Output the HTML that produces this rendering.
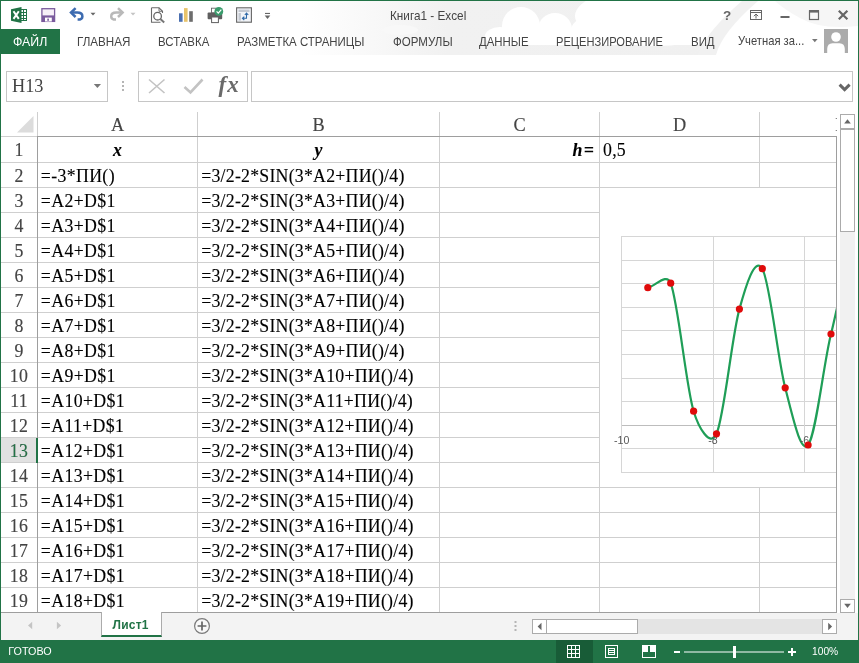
<!DOCTYPE html>
<html lang="ru"><head><meta charset="utf-8"><title>Книга1 - Excel</title>
<style>
html,body{margin:0;padding:0;background:#fff;}
body{width:859px;height:663px;overflow:hidden;position:relative;font-family:"Liberation Sans",sans-serif;color:#444;}
#w{position:absolute;left:0;top:0;width:859px;height:663px;overflow:hidden;background:#fff;will-change:transform;}
.a{position:absolute;white-space:nowrap;}
.tab{position:absolute;top:34px;height:16px;line-height:16px;font-size:12.6px;color:#444;white-space:nowrap;transform-origin:0 50%;}
.cell{position:absolute;height:25px;line-height:26px;font-family:"Liberation Serif",serif;font-size:17.8px;letter-spacing:0.24px;color:#000;white-space:nowrap;-webkit-text-stroke:0.12px #000;}
.rh{position:absolute;left:1px;width:36px;height:25px;line-height:26px;text-align:center;font-family:"Liberation Serif",serif;font-size:17.8px;letter-spacing:0.24px;color:#444;-webkit-text-stroke:0.15px #444;}
.ch{position:absolute;top:113px;height:23px;line-height:25px;text-align:center;font-family:"Liberation Serif",serif;font-size:18.3px;color:#444;-webkit-text-stroke:0.15px #444;}
.hl{position:absolute;height:1px;background:#cfcfcf;}
.vl{position:absolute;width:1px;background:#cfcfcf;}
svg{position:absolute;overflow:visible}
</style></head><body><div id="w">

<svg style="left:0;top:0" width="859" height="60" viewBox="0 0 859 60">
<defs><linearGradient id="cg" x1="0" x2="1" y1="0" y2="0"><stop offset="0" stop-color="#fff"/><stop offset="0.35" stop-color="#f1f1f1"/><stop offset="1" stop-color="#f0f0f0"/></linearGradient></defs>
<rect x="300" y="1" width="420" height="54" fill="url(#cg)"/>
<g fill="#fff">
<ellipse cx="521" cy="26" rx="19" ry="19"/><ellipse cx="500" cy="36" rx="15" ry="9"/><ellipse cx="555" cy="29" rx="17" ry="16"/><ellipse cx="586" cy="31" rx="15" ry="13"/>
<rect x="497" y="30" width="225" height="15"/>
<ellipse cx="655" cy="16" rx="80" ry="30"/><ellipse cx="400" cy="30" rx="18" ry="5" fill="#f8f8f8"/>
<path d="M700 55 Q712 30 745 1 L720 1 L720 55Z"/>
</g>
<path d="M697 55 Q708 30 742 1 L758 1 Q722 32 716 55Z" fill="#f1f1f1"/>
<path d="M775 1 H858 V26 Q820 30 800 18 Q785 10 775 1Z" fill="#f6f6f6"/>
</svg>
<div class="a" id="title" style="left:390px;top:8px;font-size:12.6px;line-height:16px;color:#444;transform-origin:0 50%;transform:scaleX(0.934)">Книга1 - Excel</div>
<svg style="left:0;top:0" width="300" height="30" viewBox="0 0 300 30">
<!-- excel logo -->
<rect x="20.5" y="9.5" width="6" height="11" fill="#fff" stroke="#217346" stroke-width="1"/>
<path d="M21 12.5H26M21 15.5H26M21 18.5H26M23.5 10V20" stroke="#217346" stroke-width="1" fill="none"/>
<path d="M11 9.3 L21.5 7 L21.5 23 L11 20.7Z" fill="#217346"/>
<path d="M13.5 11.3 L18.8 18.9 M18.8 11.3 L13.5 18.9" stroke="#fff" stroke-width="2" fill="none"/>
<!-- save -->
<rect x="41.9" y="8.7" width="12.7" height="12.7" fill="#f6f0f8" stroke="#7a5b9d" stroke-width="1.3"/>
<rect x="42" y="15.4" width="12.5" height="6" fill="#7a5b9d"/>
<rect x="45" y="17.6" width="6.8" height="3.9" fill="#fff"/>
<rect x="47.3" y="18.6" width="1.6" height="2.2" fill="#7a5b9d"/>
<!-- undo -->
<path d="M71 12.6 H77.3 Q82.4 12.6 82.4 16.4 Q82.4 19.6 77.6 19.6" fill="none" stroke="#3d6bb0" stroke-width="2.5"/>
<path d="M75.6 8.2 L71 12.6 L75.6 17" fill="none" stroke="#3d6bb0" stroke-width="2.5"/>
<path d="M90.5 12.8 H95.5 L93 15.6Z" fill="#666"/>
<!-- redo -->
<path d="M122.6 12.6 H116.3 Q111.2 12.6 111.2 16.4 Q111.2 19.6 116 19.6" fill="none" stroke="#b9b9b9" stroke-width="2.5"/>
<path d="M118 8.2 L122.6 12.6 L118 17" fill="none" stroke="#b9b9b9" stroke-width="2.5"/>
<path d="M130.5 12.8 H135.5 L133 15.6Z" fill="#c4c4c4"/>
<!-- print preview -->
<path d="M151.5 7.8 H159 L162.5 11.3 V13 M151.5 7.8 V22.2 H160.5" fill="none" stroke="#6a6a6a" stroke-width="1.1"/>
<path d="M159 7.8 V11.3 H162.5" fill="none" stroke="#6a6a6a" stroke-width="0.9"/>
<circle cx="157.6" cy="16.2" r="3.8" fill="#fff" stroke="#666" stroke-width="1.3"/>
<path d="M160.4 19 L164.2 22.4" stroke="#777" stroke-width="2"/>
<!-- chart -->
<rect x="179" y="13.3" width="3.6" height="8.5" fill="#4a6fb0"/>
<rect x="184" y="8.1" width="3.6" height="13.7" fill="#e8c36a"/>
<rect x="189.2" y="11.2" width="3.6" height="10.6" fill="#6d6d6d"/>
<!-- printer check -->
<rect x="207.6" y="12.5" width="14.6" height="6.7" rx="1" fill="#5f5f5f"/>
<rect x="211.5" y="8.2" width="5" height="4.5" fill="#fff" stroke="#666" stroke-width="0.9"/>
<rect x="211.6" y="17" width="6.8" height="5.6" fill="#fff" stroke="#5f5f5f" stroke-width="1"/>
<circle cx="218.8" cy="11.4" r="4.4" fill="#3a9c6c"/>
<path d="M216.6 11.4 L218.3 13.2 L221.3 9.6" fill="none" stroke="#fff" stroke-width="1.2"/>
<!-- table icon -->
<rect x="236.6" y="7.8" width="14.8" height="14.4" fill="#f2f4f8" stroke="#666" stroke-width="1.1"/>
<rect x="238.5" y="9.6" width="11" height="2.4" fill="#c4c9d2"/>
<rect x="238.5" y="13" width="2.4" height="7.6" fill="#c4c9d2"/>
<path d="M242.5 18.3 H246.5 V13.5 M244.3 16.6 L242.4 18.3 L244.3 20 M244.8 15 L246.5 13.1 L248.3 15" fill="none" stroke="#2f69a8" stroke-width="1.05"/>
<!-- customize -->
<rect x="265" y="12.9" width="5" height="1.1" fill="#666"/>
<path d="M264.7 15.6 H270.3 L267.5 19.1Z" fill="#666"/>
</svg>
<svg style="left:700px;top:0" width="159" height="60" viewBox="700 0 159 60">
<text x="723" y="19.6" font-family="'Liberation Sans',sans-serif" font-weight="bold" font-size="13.5" fill="#666">?</text>
<rect x="750.5" y="10.5" width="11" height="9" fill="none" stroke="#666" stroke-width="1"/>
<path d="M750.5 12.5H761.5" stroke="#666" stroke-width="1"/>
<path d="M756 14.3V18.5M753.8 16.2L756 14L758.2 16.2" stroke="#666" stroke-width="1" fill="none"/>
<rect x="780.5" y="16" width="9" height="2" fill="#666"/>
<rect x="809.5" y="11" width="9" height="8.5" fill="none" stroke="#666" stroke-width="1.2"/>
<rect x="809" y="10" width="10" height="2.6" fill="#666"/>
<path d="M838.8 10.7L847.4 19.3M847.4 10.7L838.8 19.3" stroke="#666" stroke-width="2.2"/>
<path d="M812 39.1H817.6L814.8 42.3Z" fill="#777"/>
<rect x="824" y="29" width="24" height="24" fill="#ababab"/>
<circle cx="836" cy="37" r="4.8" fill="#fff"/>
<path d="M827.2 53 V49 Q827.2 43.5 832.5 43.2 H839.5 Q844.8 43.5 844.8 49 V53Z" fill="#fff"/>
</svg>
<div class="a" style="left:0;top:29px;width:60px;height:25px;background:#217346"></div>
<div class="tab" id="t0" style="left:12.5px;transform:scaleX(0.9796);color:#fff;">ФАЙЛ</div>
<div class="tab" id="t1" style="left:76.5px;transform:scaleX(0.9224);">ГЛАВНАЯ</div>
<div class="tab" id="t2" style="left:157.5px;transform:scaleX(0.9085);">ВСТАВКА</div>
<div class="tab" id="t3" style="left:237.1px;transform:scaleX(0.9088);">РАЗМЕТКА СТРАНИЦЫ</div>
<div class="tab" id="t4" style="left:392.6px;transform:scaleX(0.9152);">ФОРМУЛЫ</div>
<div class="tab" id="t5" style="left:479.2px;transform:scaleX(0.9072);">ДАННЫЕ</div>
<div class="tab" id="t6" style="left:556.4px;transform:scaleX(0.8817);">РЕЦЕНЗИРОВАНИЕ</div>
<div class="tab" id="t7" style="left:691.0px;transform:scaleX(0.9082);">ВИД</div>
<div class="tab" id="t8" style="left:737.5px;transform:scaleX(0.8902);top:33px;">Учетная за...</div>
<div class="a" style="left:6px;top:71px;width:100px;height:29px;border:1px solid #c6c6c6"></div>
<div class="a" id="nb" style="left:12px;top:74px;font-family:'Liberation Serif',serif;font-size:18.3px;line-height:25px;color:#444">H13</div>
<div class="a" style="left:138px;top:71px;width:108px;height:29px;border:1px solid #c6c6c6"></div>
<div class="a" style="left:251px;top:71px;width:600px;height:29px;border:1px solid #c6c6c6"></div>
<svg style="left:0;top:60px" width="859" height="50" viewBox="0 60 859 50">
<path d="M93.8 84 H101 L97.4 88Z" fill="#777"/>
<g fill="#b5b5b5"><rect x="122" y="81" width="2" height="2"/><rect x="122" y="85" width="2" height="2"/><rect x="122" y="89" width="2" height="2"/></g>
<path d="M149 79.5 L164.5 93 M164.5 79.5 L149 93" stroke="#c3c3c3" stroke-width="1.6" fill="none"/>
<path d="M184.5 87 L190.5 92.5 L202.5 79.5" stroke="#c3c3c3" stroke-width="2.6" fill="none"/>
<text x="218.6" y="91.7" font-family="'Liberation Serif',serif" font-style="italic" font-weight="bold" font-size="23" letter-spacing="1" fill="#6a6a6a" id="fx">fx</text>
<path d="M839.6 84.6 L844.6 89.6 L849.6 84.6" stroke="#666" stroke-width="3" fill="none"/>
</svg>
<div class="hl" style="left:1px;top:136px;width:836px"></div>
<div class="hl" style="left:1px;top:162px;width:836px"></div>
<div class="hl" style="left:1px;top:187px;width:836px"></div>
<div class="hl" style="left:1px;top:212px;width:836px"></div>
<div class="hl" style="left:1px;top:237px;width:836px"></div>
<div class="hl" style="left:1px;top:262px;width:836px"></div>
<div class="hl" style="left:1px;top:287px;width:836px"></div>
<div class="hl" style="left:1px;top:312px;width:836px"></div>
<div class="hl" style="left:1px;top:337px;width:836px"></div>
<div class="hl" style="left:1px;top:362px;width:836px"></div>
<div class="hl" style="left:1px;top:387px;width:836px"></div>
<div class="hl" style="left:1px;top:412px;width:836px"></div>
<div class="hl" style="left:1px;top:437px;width:836px"></div>
<div class="hl" style="left:1px;top:462px;width:836px"></div>
<div class="hl" style="left:1px;top:487px;width:836px"></div>
<div class="hl" style="left:1px;top:512px;width:836px"></div>
<div class="hl" style="left:1px;top:537px;width:836px"></div>
<div class="hl" style="left:1px;top:562px;width:836px"></div>
<div class="hl" style="left:1px;top:587px;width:836px"></div>
<div class="hl" style="left:1px;top:612px;width:836px"></div>
<div class="vl" style="left:37px;top:112px;height:500px"></div>
<div class="vl" style="left:197px;top:112px;height:500px"></div>
<div class="vl" style="left:439px;top:112px;height:500px"></div>
<div class="vl" style="left:599px;top:112px;height:500px"></div>
<div class="vl" style="left:759px;top:112px;height:500px"></div>
<div class="hl" style="left:37px;top:136px;width:800px;background:#9e9e9e"></div>
<div class="vl" style="left:37px;top:137px;height:476px;background:#9e9e9e"></div>
<div class="hl" style="left:1px;top:612px;width:836px;background:#9e9e9e"></div>
<svg style="left:0;top:105px" width="40" height="35" viewBox="0 105 40 35"><path d="M33.5 116 V132.5 H17Z" fill="#dcdcdc"/></svg>
<div class="ch" style="left:38px;width:159px">A</div>
<div class="ch" style="left:198px;width:241px">B</div>
<div class="ch" style="left:440px;width:159px">C</div>
<div class="ch" style="left:600px;width:159px">D</div>
<div class="a" style="left:834px;top:113px;width:2.5px;height:23px;overflow:hidden"><div class="ch" style="left:1.3px;top:0">E</div></div>
<div class="rh" style="top:137px;">1</div>
<div class="cell" style="left:38px;width:159px;top:137px;text-align:center;font-weight:bold;font-style:italic">x</div>
<div class="cell" style="left:198px;width:241px;top:137px;text-align:center;font-weight:bold;font-style:italic">y</div>
<div class="cell" style="left:440px;width:155px;top:137px;text-align:right;font-weight:bold;font-style:italic;letter-spacing:1.2px">h=</div>
<div class="cell" style="left:603px;top:137px;">0,5</div>
<div class="rh" style="top:163px;">2</div>
<div class="cell" id="a2" style="left:40.8px;top:163px;letter-spacing:0.36px">=-3*ПИ()</div>
<div class="cell" id="b2" style="left:201.2px;top:163px;">=3/2-2*SIN(3*A2+ПИ()/4)</div>
<div class="rh" style="top:188px;">3</div>
<div class="cell" id="a3" style="left:40.8px;top:188px;letter-spacing:0.36px">=A2+D$1</div>
<div class="cell" id="b3" style="left:201.2px;top:188px;">=3/2-2*SIN(3*A3+ПИ()/4)</div>
<div class="rh" style="top:213px;">4</div>
<div class="cell" id="a4" style="left:40.8px;top:213px;letter-spacing:0.36px">=A3+D$1</div>
<div class="cell" id="b4" style="left:201.2px;top:213px;">=3/2-2*SIN(3*A4+ПИ()/4)</div>
<div class="rh" style="top:238px;">5</div>
<div class="cell" id="a5" style="left:40.8px;top:238px;letter-spacing:0.36px">=A4+D$1</div>
<div class="cell" id="b5" style="left:201.2px;top:238px;">=3/2-2*SIN(3*A5+ПИ()/4)</div>
<div class="rh" style="top:263px;">6</div>
<div class="cell" id="a6" style="left:40.8px;top:263px;letter-spacing:0.36px">=A5+D$1</div>
<div class="cell" id="b6" style="left:201.2px;top:263px;">=3/2-2*SIN(3*A6+ПИ()/4)</div>
<div class="rh" style="top:288px;">7</div>
<div class="cell" id="a7" style="left:40.8px;top:288px;letter-spacing:0.36px">=A6+D$1</div>
<div class="cell" id="b7" style="left:201.2px;top:288px;">=3/2-2*SIN(3*A7+ПИ()/4)</div>
<div class="rh" style="top:313px;">8</div>
<div class="cell" id="a8" style="left:40.8px;top:313px;letter-spacing:0.36px">=A7+D$1</div>
<div class="cell" id="b8" style="left:201.2px;top:313px;">=3/2-2*SIN(3*A8+ПИ()/4)</div>
<div class="rh" style="top:338px;">9</div>
<div class="cell" id="a9" style="left:40.8px;top:338px;letter-spacing:0.36px">=A8+D$1</div>
<div class="cell" id="b9" style="left:201.2px;top:338px;">=3/2-2*SIN(3*A9+ПИ()/4)</div>
<div class="rh" style="top:363px;">10</div>
<div class="cell" id="a10" style="left:40.8px;top:363px;letter-spacing:0.36px">=A9+D$1</div>
<div class="cell" id="b10" style="left:201.2px;top:363px;">=3/2-2*SIN(3*A10+ПИ()/4)</div>
<div class="rh" style="top:388px;">11</div>
<div class="cell" id="a11" style="left:40.8px;top:388px;letter-spacing:0.36px">=A10+D$1</div>
<div class="cell" id="b11" style="left:201.2px;top:388px;">=3/2-2*SIN(3*A11+ПИ()/4)</div>
<div class="rh" style="top:413px;">12</div>
<div class="cell" id="a12" style="left:40.8px;top:413px;letter-spacing:0.36px">=A11+D$1</div>
<div class="cell" id="b12" style="left:201.2px;top:413px;">=3/2-2*SIN(3*A12+ПИ()/4)</div>
<div class="cell" id="a13" style="left:40.8px;top:438px;letter-spacing:0.36px">=A12+D$1</div>
<div class="cell" id="b13" style="left:201.2px;top:438px;">=3/2-2*SIN(3*A13+ПИ()/4)</div>
<div class="rh" style="top:463px;">14</div>
<div class="cell" id="a14" style="left:40.8px;top:463px;letter-spacing:0.36px">=A13+D$1</div>
<div class="cell" id="b14" style="left:201.2px;top:463px;">=3/2-2*SIN(3*A14+ПИ()/4)</div>
<div class="rh" style="top:488px;">15</div>
<div class="cell" id="a15" style="left:40.8px;top:488px;letter-spacing:0.36px">=A14+D$1</div>
<div class="cell" id="b15" style="left:201.2px;top:488px;">=3/2-2*SIN(3*A15+ПИ()/4)</div>
<div class="rh" style="top:513px;">16</div>
<div class="cell" id="a16" style="left:40.8px;top:513px;letter-spacing:0.36px">=A15+D$1</div>
<div class="cell" id="b16" style="left:201.2px;top:513px;">=3/2-2*SIN(3*A16+ПИ()/4)</div>
<div class="rh" style="top:538px;">17</div>
<div class="cell" id="a17" style="left:40.8px;top:538px;letter-spacing:0.36px">=A16+D$1</div>
<div class="cell" id="b17" style="left:201.2px;top:538px;">=3/2-2*SIN(3*A17+ПИ()/4)</div>
<div class="rh" style="top:563px;">18</div>
<div class="cell" id="a18" style="left:40.8px;top:563px;letter-spacing:0.36px">=A17+D$1</div>
<div class="cell" id="b18" style="left:201.2px;top:563px;">=3/2-2*SIN(3*A18+ПИ()/4)</div>
<div class="rh" style="top:588px;">19</div>
<div class="cell" id="a19" style="left:40.8px;top:588px;letter-spacing:0.36px">=A18+D$1</div>
<div class="cell" id="b19" style="left:201.2px;top:588px;">=3/2-2*SIN(3*A19+ПИ()/4)</div>
<div class="a" style="left:1px;top:438px;width:35px;height:24px;background:#e1e1e1"></div>
<div class="rh" style="top:438px;color:#217346;">13</div>
<div class="a" style="left:36px;top:438px;width:2px;height:25px;background:#217346"></div>
<div class="a" style="left:600px;top:188px;width:236px;height:299px;background:#fff;overflow:hidden">
<svg style="left:0;top:0" width="236" height="299" viewBox="600 188 236 299">
<g stroke="#d6d6d6" stroke-width="1" fill="none">
<path d="M621 236.5H840"/>
<path d="M621 260.5H840"/>
<path d="M621 283.5H840"/>
<path d="M621 307.5H840"/>
<path d="M621 330.5H840"/>
<path d="M621 354.5H840"/>
<path d="M621 378.5H840"/>
<path d="M621 401.5H840"/>
<path d="M621 425.5H840" stroke="#bdbdbd"/>
<path d="M621 448.5H840"/>
<path d="M621 472.5H840"/>
<path d="M621.5 236V473"/>
<path d="M713.5 236V473"/>
<path d="M804.5 236V473"/>
</g>
<path d="M647.8 287.7 C655.5 286.2 666.7 272.2 670.7 283.2 C678.4 303.8 686.0 386.1 693.6 411.2 C698.3 426.6 710.0 448.5 716.5 433.8 C724.2 416.8 731.8 336.6 739.4 309.1 C745.6 286.7 754.7 255.6 762.3 268.7 C770.0 281.9 777.6 358.4 785.2 387.8 C792.9 417.2 800.5 453.9 808.1 445.0 C815.8 436.0 823.4 364.6 831.0 334.0 C838.7 303.4 846.3 256.5 853.9 261.1 C861.6 265.8 869.2 328.2 876.8 361.8" fill="none" stroke="#1f9e57" stroke-width="2.2" stroke-linejoin="round"/>
<g font-family="'Liberation Sans',sans-serif" font-size="10.6" fill="#595959" text-anchor="middle"><text x="621.7" y="444">-10</text><text x="713" y="444">-8</text><text x="804.5" y="444">-6</text></g>
<g fill="#e00b0b">
<circle cx="647.8" cy="287.7" r="3.6"/>
<circle cx="670.7" cy="283.2" r="3.6"/>
<circle cx="693.6" cy="411.2" r="3.6"/>
<circle cx="716.5" cy="433.8" r="3.6"/>
<circle cx="739.4" cy="309.1" r="3.6"/>
<circle cx="762.3" cy="268.7" r="3.6"/>
<circle cx="785.2" cy="387.8" r="3.6"/>
<circle cx="808.1" cy="445.0" r="3.6"/>
<circle cx="831.0" cy="334.0" r="3.6"/>
<circle cx="853.9" cy="261.1" r="3.6"/>
</g></svg></div>
<div class="vl" style="left:836px;top:137px;height:476px;background:#9e9e9e"></div>
<div class="a" style="left:837px;top:112px;width:21px;height:501px;background:#fff"></div>
<div class="a" style="left:840px;top:114px;width:15px;height:498px;background:#f1f1f1"></div>
<div class="a" style="left:840px;top:114px;width:13px;height:13px;border:1px solid #ababab;background:#fff"></div>
<div class="a" style="left:840px;top:129px;width:13px;height:101px;border:1px solid #ababab;background:#fff"></div>
<div class="a" style="left:840px;top:599px;width:13px;height:12px;border:1px solid #ababab;background:#fff"></div>
<svg style="left:830px;top:105px" width="29" height="520" viewBox="830 105 29 520">
<path d="M844.2 123.4 H850.8 L847.5 119.2Z" fill="#666"/>
<path d="M844.2 603.8 H850.8 L847.5 608Z" fill="#666"/>
</svg>
<div class="a" style="left:1px;top:613px;width:857px;height:27px;background:#f3f3f3"></div>
<div class="a" style="left:547px;top:619px;width:276px;height:15px;background:#e4e4e4"></div>
<div class="a" style="left:532px;top:619px;width:13px;height:13px;border:1px solid #ababab;background:#fff"></div>
<div class="a" style="left:546px;top:619px;width:90px;height:13px;border:1px solid #ababab;background:#fff"></div>
<div class="a" style="left:822px;top:619px;width:13px;height:13px;border:1px solid #ababab;background:#fff"></div>
<svg style="left:0;top:613px" width="859" height="50" viewBox="0 613 859 50">
<path d="M541.5 622.8 V630.2 L537.6 626.5Z" fill="#666"/>
<path d="M828.2 622.8 V630.2 L832.1 626.5Z" fill="#666"/>
<g fill="#b5b5b5"><rect x="514.5" y="621" width="2" height="2"/><rect x="514.5" y="625" width="2" height="2"/><rect x="514.5" y="629" width="2" height="2"/></g>
<path d="M32.2 621.7 V629.3 L28 625.5Z" fill="#c4c4c4"/>
<path d="M56.9 621.7 V629.3 L61.1 625.5Z" fill="#c4c4c4"/>
<circle cx="202" cy="626" r="7.4" fill="#f8f8f8" stroke="#7a7a7a" stroke-width="1.2"/>
<path d="M197.6 626H206.4M202 621.6V630.4" stroke="#666" stroke-width="1.7"/>
</svg>
<div class="a" style="left:101px;top:612px;width:59px;height:23px;background:#fff;border-left:1px solid #ababab;border-right:1px solid #ababab;border-bottom:2px solid #217346"></div>
<div class="a" style="left:102px;top:612px;width:59px;height:1px;background:#fff"></div>
<div class="a" id="sheet" style="left:112.5px;top:617px;font-size:12px;font-weight:bold;line-height:16px;letter-spacing:0.25px;color:#217346;transform-origin:0 50%">Лист1</div>
<div class="a" style="left:0;top:640px;width:859px;height:23px;background:#217346"></div>
<div class="a" style="left:556px;top:640px;width:37px;height:23px;background:#185c37"></div>
<div class="a" id="ready" style="left:8.3px;top:644px;font-size:10.8px;line-height:14px;color:#fff;transform-origin:0 50%">ГОТОВО</div>
<div class="a" id="zoom" style="left:812px;top:644px;font-size:11px;line-height:14px;color:#fff;transform-origin:0 50%;transform:scaleX(0.93)">100%</div>
<svg style="left:540px;top:640px" width="319" height="23" viewBox="540 640 319 23">
<g fill="none" stroke="#fff" stroke-width="1">
<rect x="567.5" y="645.5" width="12" height="12"/><path d="M571.5 645.5V657.5M575.5 645.5V657.5M567.5 649.5H579.5M567.5 653.5H579.5"/>
<rect x="605.5" y="645.5" width="12" height="12"/><rect x="608.5" y="648.5" width="6" height="6"/><path d="M608.5 650.5H614.5M608.5 652.5H614.5"/>
<rect x="642.5" y="645.5" width="13" height="12"/>
</g>
<rect x="643" y="646" width="5" height="6" fill="#fff"/><rect x="650" y="646" width="5" height="6" fill="#fff"/>
<rect x="674" y="651" width="6" height="2" fill="#fff"/>
<rect x="684" y="651.5" width="100" height="1" fill="#fff"/>
<rect x="733" y="646" width="3" height="12" fill="#fff"/>
<path d="M788 652H796M792 648V656" stroke="#fff" stroke-width="2"/>
</svg>
<div class="a" style="left:0;top:0;width:859px;height:1px;background:#217346"></div>
<div class="a" style="left:0;top:0;width:1px;height:663px;background:#217346"></div>
<div class="a" style="left:858px;top:0;width:1px;height:663px;background:#217346"></div>
</div></body></html>
